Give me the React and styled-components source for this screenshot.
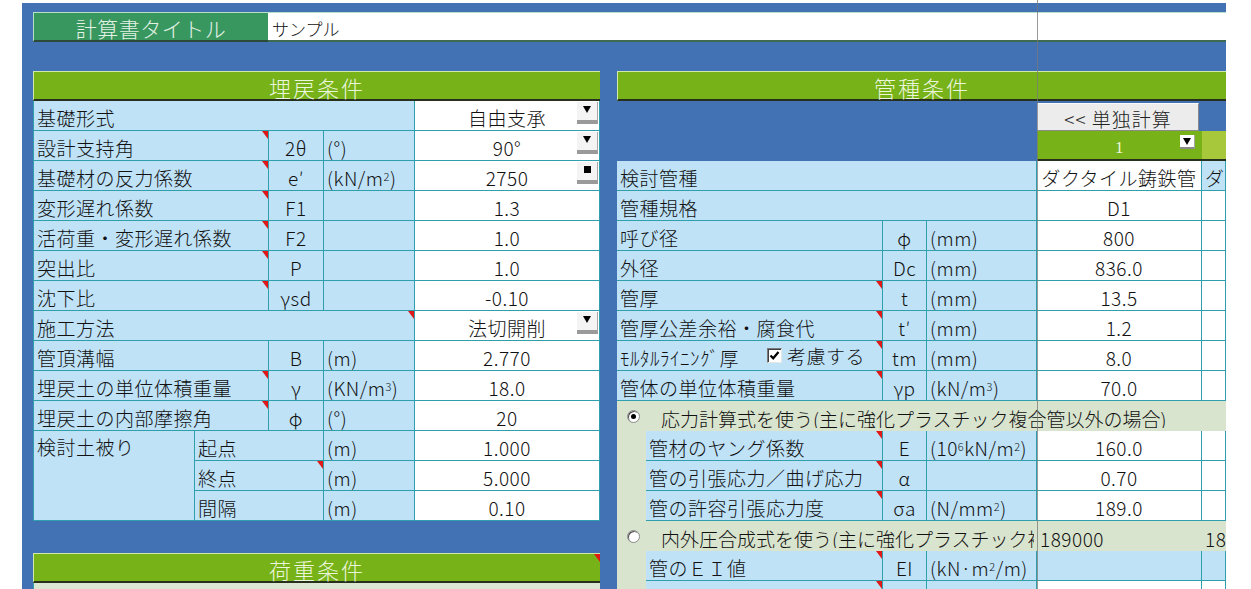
import React from "react";
import styled, { createGlobalStyle, css } from "styled-components";

const GlobalStyle = createGlobalStyle`
  html, body {
    margin: 0;
    padding: 0;
    background: #fff;
  }
  body {
    font-family: "Noto Sans CJK JP", "Liberation Sans", sans-serif;
    font-weight: 300;
    color: #111;
  }
`;

const tones = {
  label: "#bfe2f7",
  value: "#ffffff",
  pale: "#d9e4cf",
  blank: "transparent",
  green: "#76b218",
  lime: "#a6c83a",
};

const Page = styled.div`
  position: relative;
  width: 1251px;
  height: 589px;
  overflow: hidden;
  background: #fff;
  padding: 3px 0 0 22px;
  box-sizing: border-box;
`;

const FreezeLine = styled.div`
  position: absolute;
  left: 1037px;
  top: 0;
  bottom: 0;
  width: 1px;
  background: rgba(120, 120, 120, 0.75);
`;

const Sheet = styled.div`
  width: 1204px;
  height: 586px;
  background: #4272b4;
  padding: 9px 0 0 11px;
  box-sizing: border-box;
  overflow: hidden;
`;

const TitleRow = styled.div`
  display: flex;
  height: 30px;
  margin-bottom: 29px;
`;

const TitleLabel = styled.div`
  width: 235px;
  box-sizing: border-box;
  background: #38975f;
  border-top: 1px solid #b8e0c4;
  border-left: 1px solid #b8e0c4;
  border-bottom: 2px solid #2c4a38;
  color: #e4f2e6;
  font-size: 21px;
  letter-spacing: 0.5px;
  display: flex;
  align-items: center;
  justify-content: center;
  padding-top: 2px;
`;

const TitleInput = styled.div`
  flex: 1;
  box-sizing: border-box;
  background: #fff;
  border-top: 1px solid #b8e0c4;
  border-bottom: 2px solid #3e6a52;
  font-size: 17px;
  display: flex;
  align-items: center;
  padding: 3px 0 0 4px;
`;

const Columns = styled.div`
  display: flex;
  gap: 17px;
  align-items: flex-start;
`;

const LeftPanel = styled.div`
  width: 567px;
  display: flex;
  flex-direction: column;
`;

const RightPanel = styled.div`
  width: 609px;
  display: flex;
  flex-direction: column;
`;

const SectionHeader = styled.div`
  position: relative;
  height: 30px;
  box-sizing: border-box;
  margin-top: ${(p) => p.$gap || 0}px;
  background: #76b218;
  border-top: 1px solid #cfeaa8;
  border-left: 1px solid #cfeaa8;
  border-bottom: 2px solid #26301c;
  color: #ecf6dc;
  font-size: 22px;
  letter-spacing: 2px;
  display: flex;
  align-items: center;
  justify-content: center;
  padding-top: 2px;
  ${(p) =>
    p.$note &&
    css`
      &::after {
        content: "";
        position: absolute;
        top: 0;
        right: 0;
        border-top: 8px solid #e01818;
        border-left: 6px solid transparent;
      }
    `}
`;

const PaleRow = styled.div`
  height: 30px;
  background: #dbe6d3;
  border-left: 1px solid #2f9fae;
`;

const LeftGrid = styled.div`
  display: grid;
  grid-template-columns: 161px 74px 55px 91px 185px;
  grid-auto-rows: 30px;
  border-left: 1px solid #2f9fae;
`;

const RightGrid = styled.div`
  display: grid;
  grid-template-columns: 29px 237px 44px 110px 165px 24px;
  grid-auto-rows: 30px;
`;

const Cell = styled.div`
  position: relative;
  grid-column: span ${(p) => p.$span || 1};
  grid-row: span ${(p) => p.$rows || 1};
  background: ${(p) => tones[p.$tone || "label"]};
  border-right: ${(p) => (p.$bare ? "none" : "1px solid #2f9fae")};
  border-bottom: ${(p) => (p.$bare ? "none" : "1px solid #2f9fae")};
  box-sizing: border-box;
  display: flex;
  align-items: ${(p) => (p.$top ? "flex-start" : "center")};
  justify-content: ${(p) => (p.$center ? "center" : "flex-start")};
  padding: ${(p) => (p.$top ? "6px 3px 0" : "4px 3px 0")};
  min-width: 0;
  overflow: hidden;
  white-space: nowrap;
  font-size: 19px;
  letter-spacing: 0.5px;
  line-height: 1;
  color: #111;
  sup {
    font-size: 11px;
    line-height: 0;
    position: relative;
    top: -2px;
  }
  ${(p) =>
    p.$note &&
    css`
      &::after {
        content: "";
        position: absolute;
        top: 0;
        right: 0;
        border-top: 8px solid #e01818;
        border-left: 6px solid transparent;
      }
    `}
`;

const DropButton = styled.span`
  position: absolute;
  top: 1px;
  right: 1px;
  width: 21px;
  height: 22px;
  box-sizing: border-box;
  background: #f4f4f4;
  border-right: 1px solid #a8a8a8;
  border-bottom: 4px solid #9a9a9a;
  display: flex;
  justify-content: center;
  padding-top: 4px;
  &::before {
    content: "";
    width: ${(p) => (p.$square ? "7px" : "0")};
    height: ${(p) => (p.$square ? "7px" : "0")};
    background: ${(p) => (p.$square ? "#000" : "transparent")};
    border-left: ${(p) => (p.$square ? "0" : "4px solid transparent")};
    border-right: ${(p) => (p.$square ? "0" : "4px solid transparent")};
    border-top: ${(p) => (p.$square ? "0" : "7px solid #000")};
  }
`;

const SmallDrop = styled(DropButton)`
  top: 4px;
  right: 7px;
  width: 15px;
  height: 14px;
  padding-top: 3px;
  background: #fff;
  border-bottom: 2px solid #8a8a8a;
`;

const ActionButton = styled.div`
  align-self: flex-start;
  width: 163px;
  height: 28px;
  margin: -2px 0 0 -3px;
  box-sizing: border-box;
  background: #ececec;
  border: 1px solid;
  border-color: #fafafa #8a8a8a #8a8a8a #fafafa;
  font-size: 19px;
  color: #222;
  display: flex;
  align-items: center;
  justify-content: center;
  padding-top: 2px;
  letter-spacing: 1px;
`;

const SelectCell = styled(Cell)`
  border-bottom: 2px solid #26301c;
  border-right: none;
  align-items: flex-end;
  padding-bottom: 3px;
  font-family: "Liberation Serif", serif;
  font-size: 17px;
  color: #ecf6dc;
`;

const CheckGroup = styled.span`
  display: inline-flex;
  align-items: center;
  gap: 5px;
  margin-left: 28px;
  align-self: flex-start;
  margin-top: 1px;
`;

const CheckBox = styled.span`
  width: 15px;
  height: 15px;
  box-sizing: border-box;
  background: #fff;
  border: 1px solid;
  border-color: #7a7a7a #e6e6e6 #e6e6e6 #7a7a7a;
  box-shadow: inset 1px 1px 0 #404040;
  display: inline-flex;
  align-items: center;
  justify-content: center;
`;

const RadioRow = styled(Cell)`
  border-right: none;
  border-bottom: none;
  padding-left: 10px;
  gap: 21px;
  letter-spacing: 0;
`;

const RadioText = styled.span`
  min-width: 0;
  overflow: hidden;
`;

const Radio = styled.span`
  flex: none;
  width: 13px;
  height: 13px;
  box-sizing: border-box;
  border-radius: 50%;
  background: #fff;
  border: 1px solid #8a8a8a;
  box-shadow: inset 1px 1px 0 #505050;
  display: inline-flex;
  align-items: center;
  justify-content: center;
  margin-top: -3px;
  &::after {
    content: "";
    width: 5px;
    height: 5px;
    border-radius: 50%;
    background: ${(p) => (p.$checked ? "#000" : "transparent")};
  }
`;

const burialRows = [
  { label: "基礎形式", full: true, value: "自由支承", drop: "arrow" },
  { label: "設計支持角", note: true, sym: "2θ", unit: "(°)", value: "90°", drop: "arrow" },
  {
    label: "基礎材の反力係数",
    note: true,
    sym: "e′",
    unit: (
      <>
        (kN/m<sup>2</sup>)
      </>
    ),
    value: "2750",
    drop: "square",
  },
  { label: "変形遅れ係数", note: true, sym: "F1", value: "1.3" },
  { label: "活荷重・変形遅れ係数", note: true, sym: "F2", value: "1.0" },
  { label: "突出比", note: true, sym: "P", value: "1.0" },
  { label: "沈下比", note: true, sym: "γsd", value: "-0.10" },
  { label: "施工方法", full: true, note: true, value: "法切開削", drop: "arrow" },
  { label: "管頂溝幅", sym: "B", unit: "(m)", value: "2.770" },
  {
    label: "埋戻土の単位体積重量",
    note: true,
    sym: "γ",
    unit: (
      <>
        (KN/m<sup>3</sup>)
      </>
    ),
    value: "18.0",
  },
  { label: "埋戻土の内部摩擦角", note: true, sym: "φ", unit: "(°)", value: "20" },
];

const coverRows = [
  { label: "起点", unit: "(m)", value: "1.000" },
  { label: "終点", note: true, unit: "(m)", value: "5.000" },
  { label: "間隔", unit: "(m)", value: "0.10" },
];

const pipeRows = [
  { label: "呼び径", sym: "φ", unit: "(mm)", value: "800" },
  { label: "外径", sym: "Dc", unit: "(mm)", value: "836.0" },
  { label: "管厚", note: true, sym: "t", unit: "(mm)", value: "13.5" },
  { label: "管厚公差余裕・腐食代", note: true, sym: "t′", unit: "(mm)", value: "1.2" },
  { label: "ﾓﾙﾀﾙﾗｲﾆﾝｸﾞ厚", note: true, check: true, sym: "tm", unit: "(mm)", value: "8.0" },
  {
    label: "管体の単位体積重量",
    note: true,
    sym: "γp",
    unit: (
      <>
        (kN/m<sup>3</sup>)
      </>
    ),
    value: "70.0",
  },
];

const stressRows = [
  {
    label: "管材のヤング係数",
    sym: "E",
    unit: (
      <>
        (10<sup>6</sup>kN/m<sup>2</sup>)
      </>
    ),
    value: "160.0",
  },
  { label: "管の引張応力／曲げ応力", sym: "α", unit: "", value: "0.70" },
  {
    label: "管の許容引張応力度",
    sym: "σa",
    unit: (
      <>
        (N/mm<sup>2</sup>)
      </>
    ),
    value: "189.0",
  },
];

const CheckMark = () => (
  <svg width="11" height="11" viewBox="0 0 11 11">
    <path d="M1.5 5.5 L4.2 8.3 L9.5 2" fill="none" stroke="#000" strokeWidth="2.2" />
  </svg>
);

const ValueCell = ({ value, drop }) => (
  <Cell $tone="value" $center>
    {value}
    {drop && <DropButton $square={drop === "square"} />}
  </Cell>
);

const App = () => {
  return (
    <>
      <GlobalStyle />
      <Page>
        <Sheet>
          <TitleRow>
            <TitleLabel>計算書タイトル</TitleLabel>
            <TitleInput>サンプル</TitleInput>
          </TitleRow>
          <Columns>
            <LeftPanel>
              <SectionHeader>埋戻条件</SectionHeader>
              <LeftGrid>
                {burialRows.map((r) =>
                  r.full ? (
                    <React.Fragment key={r.label}>
                      <Cell $span={4} $note={r.note}>
                        {r.label}
                      </Cell>
                      <ValueCell value={r.value} drop={r.drop} />
                    </React.Fragment>
                  ) : (
                    <React.Fragment key={r.label}>
                      <Cell $span={2} $note={r.note}>
                        {r.label}
                      </Cell>
                      <Cell $center>{r.sym}</Cell>
                      <Cell>{r.unit}</Cell>
                      <ValueCell value={r.value} drop={r.drop} />
                    </React.Fragment>
                  )
                )}
                <Cell $rows={3} $top>
                  検討土被り
                </Cell>
                {coverRows.map((r) => (
                  <React.Fragment key={r.label}>
                    <Cell $span={2} $note={r.note}>
                      {r.label}
                    </Cell>
                    <Cell>{r.unit}</Cell>
                    <ValueCell value={r.value} />
                  </React.Fragment>
                ))}
              </LeftGrid>
              <SectionHeader $gap={32} $note>
                荷重条件
              </SectionHeader>
              <PaleRow />
            </LeftPanel>

            <RightPanel>
              <SectionHeader>管種条件</SectionHeader>
              <RightGrid>
                <Cell $span={4} $tone="blank" $bare />
                <Cell $tone="blank" $bare>
                  <ActionButton>&lt;&lt; 単独計算</ActionButton>
                </Cell>
                <Cell $tone="blank" $bare />

                <Cell $span={4} $tone="blank" $bare />
                <SelectCell $tone="green" $center>
                  1
                  <SmallDrop />
                </SelectCell>
                <SelectCell $tone="lime" />

                <Cell $span={4}>検討管種</Cell>
                <Cell $tone="value" $center>
                  ダクタイル鋳鉄管
                </Cell>
                <Cell>ダ</Cell>

                <Cell $span={4}>管種規格</Cell>
                <Cell $tone="value" $center>
                  D1
                </Cell>
                <Cell $tone="value" />

                {pipeRows.map((r) => (
                  <React.Fragment key={r.label}>
                    <Cell $span={2} $note={r.note}>
                      {r.label}
                      {r.check && (
                        <CheckGroup>
                          <CheckBox>
                            <CheckMark />
                          </CheckBox>
                          考慮する
                        </CheckGroup>
                      )}
                    </Cell>
                    <Cell $center>{r.sym}</Cell>
                    <Cell>{r.unit}</Cell>
                    <Cell $tone="value" $center>
                      {r.value}
                    </Cell>
                    <Cell $tone="value" />
                  </React.Fragment>
                ))}

                <RadioRow $span={6} $tone="pale">
                  <Radio $checked />
                  <RadioText>応力計算式を使う(主に強化プラスチック複合管以外の場合)</RadioText>
                </RadioRow>

                {stressRows.map((r) => (
                  <React.Fragment key={r.label}>
                    <Cell $tone="pale" $bare />
                    <Cell $note>{r.label}</Cell>
                    <Cell $center>{r.sym}</Cell>
                    <Cell>{r.unit}</Cell>
                    <Cell $tone="value" $center>
                      {r.value}
                    </Cell>
                    <Cell $tone="value" />
                  </React.Fragment>
                ))}

                <RadioRow $span={4} $tone="pale">
                  <Radio />
                  <RadioText>内外圧合成式を使う(主に強化プラスチック複合</RadioText>
                </RadioRow>
                <Cell $tone="pale" $bare>
                  189000
                </Cell>
                <Cell $tone="pale" $bare>
                  18
                </Cell>

                <Cell $tone="pale" $bare />
                <Cell $note>管のＥＩ値</Cell>
                <Cell $center>EI</Cell>
                <Cell>
                  (kN·m<sup>2</sup>/m)
                </Cell>
                <Cell />
                <Cell />

                <Cell $tone="pale" $bare />
                <Cell $note />
                <Cell />
                <Cell />
                <Cell $tone="value" />
                <Cell $tone="value" />
              </RightGrid>
            </RightPanel>
          </Columns>
        </Sheet>
        <FreezeLine />
      </Page>
    </>
  );
};

export default App;
